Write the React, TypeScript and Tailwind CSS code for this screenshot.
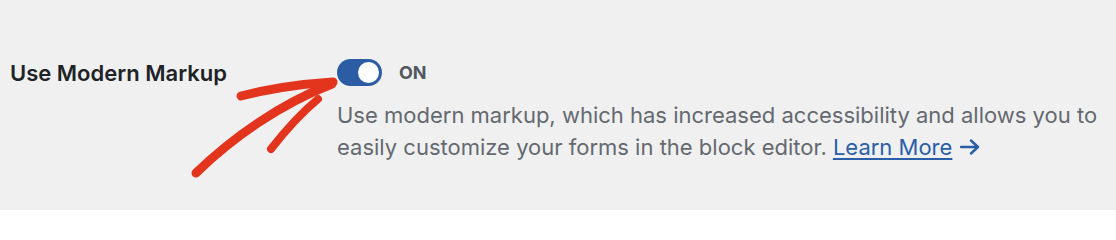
import { useState } from 'react';

const RedArrow = () => (
  <svg
    className="pointer-events-none absolute left-0 top-0"
    width="1116"
    height="210"
    viewBox="0 0 1116 210"
    fill="none"
  >
    <g stroke="#e3341e" strokeLinecap="round" strokeLinejoin="round">
      {/* shaft */}
      <path d="M196 173 C 232 138, 280 104, 332 84" strokeWidth="9" />
      {/* upper arm */}
      <path d="M241 96 C 272 88, 302 84, 333 82" strokeWidth="9" />
      {/* lower arm */}
      <path d="M271 149 C 285 131, 300 114, 318 99" strokeWidth="8" />
    </g>
  </svg>
);

const Toggle = ({ on, onChange }: { on: boolean; onChange: (v: boolean) => void }) => (
  <button
    type="button"
    onClick={() => onChange(!on)}
    className={`relative flex h-[27px] w-[45px] shrink-0 items-center rounded-full px-[3px] ${
      on ? 'justify-end bg-[#2b5ca4]' : 'justify-start bg-[#8c8f94]'
    }`}
  >
    <span className="h-[21px] w-[21px] rounded-full bg-white" />
  </button>
);

const App = () => {
  const [modern, setModern] = useState(true);

  return (
    <div
      className="relative h-[210px] w-[1116px] overflow-hidden bg-[#f0f0f0]"
      style={{ fontFamily: 'Inter, "Noto Sans", sans-serif' }}
    >
      <div className="flex pl-[10px] pt-[59px]">
        {/* Label */}
        <div className="w-[327px] shrink-0 pt-[1px]">
          <span className="text-[22px] font-semibold leading-[26px] text-[#1d2327]">
            Use Modern Markup
          </span>
        </div>

        {/* Control */}
        <div className="flex flex-col">
          <div className="flex items-center gap-[17px]">
            <Toggle on={modern} onChange={setModern} />
            <span className="text-[18px] font-bold text-[#50575e]">
              {modern ? 'ON' : 'OFF'}
            </span>
          </div>
          <p className="mt-[13px] text-[22px] leading-[32px] text-[#646970]">
            Use modern markup, which has increased accessibility and allows you to
            <br />
            easily customize your forms in the block editor.{' '}
            <a
              href="#"
              className="inline-flex items-center gap-[8px] text-[#2a5ea8]"
            >
              <span className="underline underline-offset-[3px]">Learn More</span>
              <svg width="20" height="16" viewBox="0 0 20 16" fill="none">
                <path
                  d="M1 8h17M11 1.5 18 8l-7 6.5"
                  stroke="currentColor"
                  strokeWidth="2.4"
                  strokeLinecap="round"
                  strokeLinejoin="round"
                />
              </svg>
            </a>
          </p>
        </div>
      </div>

      <RedArrow />
    </div>
  );
};

export default App;
